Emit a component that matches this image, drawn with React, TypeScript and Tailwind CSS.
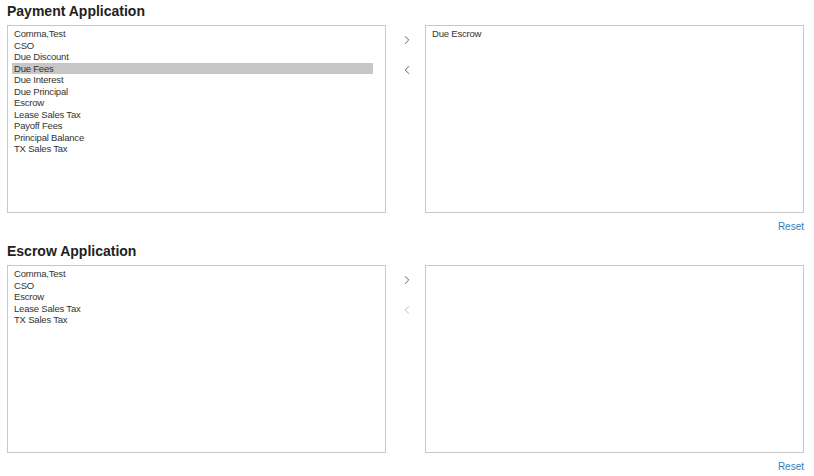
import { ChevronLeft, ChevronRight } from "lucide-react";

type ListPickerProps = {
  title: string;
  available: string[];
  selected: string[];
  highlighted?: string;
  canRemove: boolean;
};

const ListPicker = ({ title, available, selected, highlighted, canRemove }: ListPickerProps) => {
  return (
    <div className="flex flex-col">
      <h2 className="text-[14px] font-bold text-[#222] leading-[20px] h-[25px] pt-[1px]">{title}</h2>
      <div className="flex">
        <div className="w-[379px] h-[188px] border border-[#c8c8c8] pt-[2px] pl-[4px] pr-[12px] bg-white">
          {available.map((item) => (
            <div
              key={item}
              className={
                item === highlighted
                  ? "pl-[2px] text-[9.5px] tracking-[-0.2px] leading-[11.5px] h-[11.5px] text-[#333] bg-[#c6c6c6]"
                  : "pl-[2px] text-[9.5px] tracking-[-0.2px] leading-[11.5px] h-[11.5px] text-[#333]"
              }
            >
              {item}
            </div>
          ))}
        </div>
        <div className="w-[39px] flex flex-col items-center pt-[8px] gap-[16px]">
          <ChevronRight size={14} strokeWidth={1.6} className="text-[#555] ml-[3px]" />
          <ChevronLeft size={14} strokeWidth={1.6} className={canRemove ? "text-[#555] ml-[3px]" : "text-[#bbb] ml-[3px]"} />
        </div>
        <div className="w-[379px] h-[188px] border border-[#c8c8c8] pt-[2px] pl-[4px] pr-[12px] bg-white">
          {selected.map((item) => (
            <div key={item} className="pl-[2px] text-[9.5px] tracking-[-0.2px] leading-[11.5px] h-[11.5px] text-[#333]">
              {item}
            </div>
          ))}
        </div>
      </div>
      <div className="flex justify-end w-[797px] h-[27px] pt-[8px]">
        <span className="text-[10px] text-[#337ab7] leading-[12px]">Reset</span>
      </div>
    </div>
  );
};

export default function App() {
  return (
    <div className="w-[814px] h-[476px] bg-white pl-[7px] pt-0" style={{ fontFamily: "Arial, 'Liberation Sans', sans-serif" }}>
      <ListPicker
        title="Payment Application"
        available={[
          "Comma,Test",
          "CSO",
          "Due Discount",
          "Due Fees",
          "Due Interest",
          "Due Principal",
          "Escrow",
          "Lease Sales Tax",
          "Payoff Fees",
          "Principal Balance",
          "TX Sales Tax",
        ]}
        selected={["Due Escrow"]}
        highlighted="Due Fees"
        canRemove={true}
      />
      <ListPicker
        title="Escrow Application"
        available={["Comma,Test", "CSO", "Escrow", "Lease Sales Tax", "TX Sales Tax"]}
        selected={[]}
        canRemove={false}
      />
    </div>
  );
}
